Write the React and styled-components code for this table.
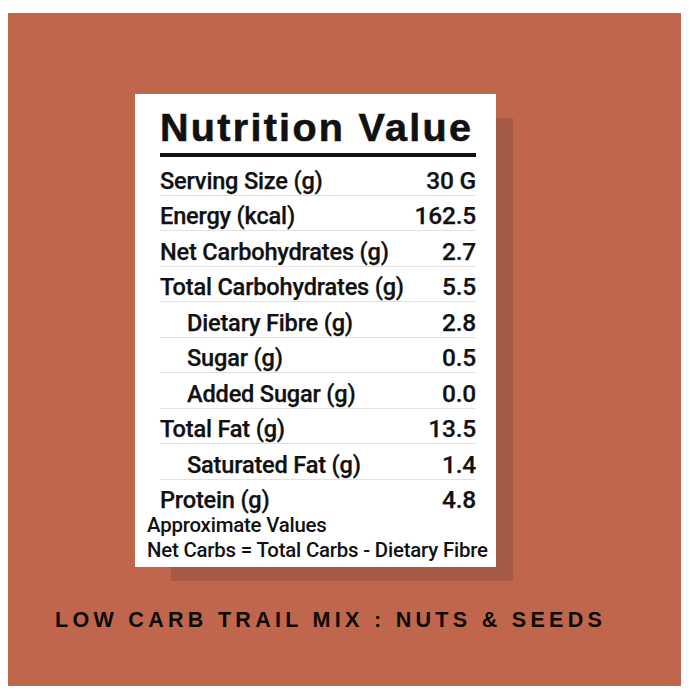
import React from "react";
import styled, { createGlobalStyle } from "styled-components";

const GlobalStyle = createGlobalStyle`
  html, body {
    margin: 0;
    padding: 0;
    background: #ffffff;
  }
`;

const Page = styled.div`
  width: 690px;
  height: 700px;
  padding: 13px 9px 14px 8px;
  box-sizing: border-box;
  background: #ffffff;
`;

const Panel = styled.div`
  width: 673px;
  height: 673px;
  background: #c0664c;
  padding: 81px 0 0 127px;
  box-sizing: border-box;
  display: flex;
  flex-direction: column;
`;

const Stack = styled.div`
  position: relative;
  z-index: 0;
`;

const Card = styled.div`
  position: relative;
  width: 361px;
  height: 473px;
  box-sizing: border-box;
  background: #ffffff;
  display: flex;
  flex-direction: column;
  font-family: Roboto, "Liberation Sans", sans-serif;
  color: #111111;

  & > * {
    flex-shrink: 0;
  }

  &::before {
    content: "";
    position: absolute;
    left: 36px;
    top: 24px;
    width: 342px;
    height: 463px;
    background: #a65b46;
    z-index: -1;
  }
`;

const Title = styled.h1`
  margin: 0;
  padding: 11px 20px 0 25px;
  font-family: "Liberation Sans", Arial, sans-serif;
  font-weight: 700;
  font-size: 39.5px;
  line-height: 44px;
  letter-spacing: 2.3px;
  -webkit-text-stroke: 0.6px #111111;
  white-space: nowrap;
`;

const Rule = styled.div`
  height: 4px;
  margin: 4px 20px 0 25px;
  background: #111111;
`;

const Rows = styled.div`
  display: flex;
  flex-direction: column;
  padding: 3px 20px 0 25px;
`;

const Row = styled.div`
  display: flex;
  justify-content: space-between;
  align-items: flex-end;
  height: 35.5px;
  padding-left: ${(p) => (p.$indent ? "27px" : "0")};
  border-bottom: ${(p) => (p.$last ? "1px solid transparent" : "1px solid #e2e2e2")};
  box-sizing: border-box;
  font-size: 23.6px;
  line-height: normal;
  font-weight: 500;
  letter-spacing: -0.2px;
  -webkit-text-stroke: 0.25px #111111;
`;

const Value = styled.span`
  font-size: 24.5px;
`;

const Notes = styled.div`
  margin-top: -2px;
  padding: 0 0 0 12px;
  font-size: 20.4px;
  font-weight: 500;
  line-height: 25px;
  letter-spacing: -0.2px;
  white-space: nowrap;
`;

const Caption = styled.div`
  margin: 41px 0 0 -80px;
  font-family: "Liberation Sans", Arial, sans-serif;
  font-weight: 700;
  font-size: 21.5px;
  letter-spacing: 4.3px;
  color: #0d0a08;
  white-space: nowrap;
`;

const rows = [
  ["Serving Size (g)", "30 G"],
  ["Energy (kcal)", "162.5"],
  ["Net Carbohydrates (g)", "2.7"],
  ["Total Carbohydrates (g)", "5.5"],
  ["Dietary Fibre (g)", "2.8", true],
  ["Sugar (g)", "0.5", true],
  ["Added Sugar (g)", "0.0", true],
  ["Total Fat (g)", "13.5"],
  ["Saturated Fat (g)", "1.4", true],
  ["Protein (g)", "4.8"],
];

export default function App() {
  return (
    <Page>
      <GlobalStyle />
      <Panel>
        <Stack>
          <Card>
            <Title>Nutrition Value</Title>
            <Rule />
            <Rows>
              {rows.map(([label, value, indent], i) => (
                <Row key={label} $indent={indent} $last={i === rows.length - 1}>
                  <span>{label}</span>
                  <Value>{value}</Value>
                </Row>
              ))}
            </Rows>
            <Notes>
              Approximate Values
              <br />
              Net Carbs = Total Carbs - Dietary Fibre
            </Notes>
          </Card>
        </Stack>
        <Caption>LOW CARB TRAIL MIX : NUTS &amp; SEEDS</Caption>
      </Panel>
    </Page>
  );
}
